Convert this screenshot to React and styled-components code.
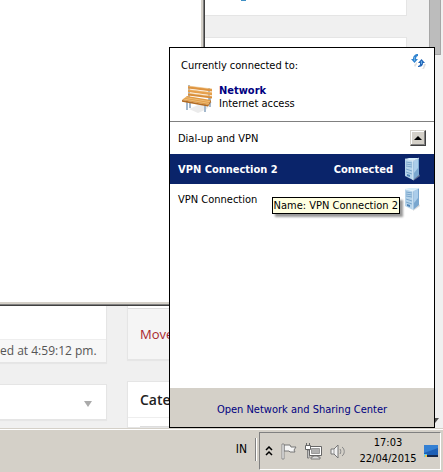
import React from "react"
import styled, { createGlobalStyle, css } from "styled-components"

const GlobalStyle = createGlobalStyle`
  * {
    box-sizing: border-box;
  }

  body {
    margin: 0;
    font-family: "DejaVu Sans Condensed", "DejaVu Sans", sans-serif;
    font-size: 11px;
    line-height: 13px;
    color: #000;
  }

  button {
    font: inherit;
    color: inherit;
    margin: 0;
    padding: 0;
    border: 0;
    background: none;
    text-align: left;
  }

  svg {
    display: block;
    flex: none;
  }
`

const Desktop = styled.div`
  display: flex;
  flex-direction: column;
  height: 100vh;
  overflow: hidden;
`

const WorkArea = styled.main`
  position: relative;
  flex: 1;
  min-height: 0;
  display: flex;
  overflow: hidden;
  background: #f0f0f0;
  font-family: "Open Sans", sans-serif;
`

const Column = styled.div`
  display: flex;
  flex-direction: column;
  gap: 21px;
  min-width: 0;
  flex: ${({ $grow }) => ($grow ? "1" : "0 0 107px")};
  padding-bottom: ${({ $grow }) => ($grow ? "0" : "8px")};
`

const Card = styled.section`
  display: flex;
  flex-direction: column;
  justify-content: ${({ $fill }) => ($fill ? "flex-end" : "flex-start")};
  flex: ${({ $fill }) => ($fill ? "1" : "none")};
  background: #fff;
  border: 1px solid #e5e5e5;
  border-left-width: ${({ $cut }) => ($cut ? "0" : "1px")};
  box-shadow: 0 1px 1px rgba(0, 0, 0, 0.04);
`

const CardEnd = styled.div`
  height: 16px;
  padding-left: 113px;
  border: 1px solid #e5e5e5;
  border-top: 0;
  background: #fff;
`

const LinkTail = styled.span`
  display: block;
  width: 5px;
  height: 1px;
  background: #3f8fc4;
`

const SavedBar = styled.footer`
  padding: 2px 10px 2px 0;
  border-top: 1px solid #eee;
  background: #f7f7f7;
  color: #555;
  font-size: 12px;
  line-height: 18px;
  text-align: right;
  white-space: nowrap;
`

const TrashBar = styled.footer`
  padding: 15px 12px;
  border-top: 1px solid #ddd;
  background: #f5f5f5;
  color: #a8272d;
  font-size: 13px;
  line-height: 20px;
`

const CardTitle = styled.h2`
  margin: 0;
  padding: 9px 12px 8px;
  border-bottom: 1px solid #eee;
  color: #222;
  font-size: 14px;
  font-weight: 600;
  line-height: 18px;
`

const CategoryBox = styled.div`
  height: 9px;
  margin: 0 12px;
  border-bottom: 1px solid #ddd;
`

const CardToggle = styled.button`
  display: flex;
  justify-content: flex-end;
  align-items: center;
  height: 34px;
  padding: 4px 14px 0;
`

const Gutter = styled.div`
  flex: 0 0 20px;
`

const ScrollTrack = styled.div`
  flex: 0 0 14px;
  display: flex;
  flex-direction: column;
  justify-content: space-between;
  margin-left: 22px;
  padding-bottom: 4px;
`

const ScrollThumb = styled.div`
  width: 12px;
  height: 55px;
  border: 1px solid #a6a6a6;
  border-top: 0;
  background: #bcbcbc;
`

const BlankWindow = styled.div`
  position: absolute;
  top: 0;
  left: 0;
  width: 205px;
  height: 306px;
  background: #fff;
  border: solid #404040;
  border-width: 0 1px 1px 0;
  box-shadow: inset -1px -1px #808080, inset -3px -3px #d4d0c8;
`

const Flyout = styled.section`
  position: absolute;
  top: 47px;
  right: 8px;
  bottom: 0;
  width: 266px;
  display: flex;
  flex-direction: column;
  background: #fff;
  border: 1px solid #000;
  font-family: "DejaVu Sans Condensed", "DejaVu Sans", sans-serif;
`

const Summary = styled.header`
  display: flex;
  justify-content: space-between;
  align-items: flex-start;
  height: 74px;
  padding: 6px 7px 0 11px;
  border-bottom: 1px solid #808080;
`

const SummaryText = styled.div`
  padding-top: 5px;
`

const CurrentNetwork = styled.div`
  display: flex;
  gap: 6px;
  margin-top: 12px;
`

const NetworkName = styled.strong`
  display: block;
  color: #000080;
`

const GroupHeader = styled.div`
  display: flex;
  justify-content: space-between;
  align-items: center;
  height: 32px;
  padding: 0 8px;
`

const CollapseButton = styled.button`
  display: flex;
  align-items: center;
  justify-content: center;
  width: 16px;
  height: 16px;
  background: #d4d0c8;
  border: 1px solid;
  border-color: #d4d0c8 #404040 #404040 #d4d0c8;
  box-shadow: inset -1px -1px #808080, inset 1px 1px #fff;
`

const ConnectionList = styled.div`
  position: relative;
  flex: 1;
`

const Connection = styled.button`
  display: flex;
  align-items: center;
  width: 100%;
  height: 30px;
  padding: 0 14px 0 8px;

  ${({ $selected }) =>
    $selected &&
    css`
      background: #0a246a;
      color: #fff;
      font-weight: bold;
    `}
`

const ConnectionName = styled.span`
  flex: 1;
`

const ConnectionState = styled.span`
  margin-right: 11px;
`

const Tooltip = styled.div`
  position: absolute;
  top: 43px;
  right: 34px;
  padding: 1px;
  border: 1px solid #000;
  background: #ffffe1;
  box-shadow: 3px 3px 2px rgba(0, 0, 0, 0.4);
  line-height: 13px;
  white-space: nowrap;
`

const FlyoutFooter = styled.footer`
  display: flex;
  align-items: center;
  justify-content: center;
  height: 39px;
  padding-top: 3px;
  background: #d4d0c8;
`

const CenterLink = styled.a`
  color: #000080;
  text-decoration: none;
`

const Taskbar = styled.footer`
  display: flex;
  justify-content: flex-end;
  height: 44px;
  padding: 2px 2px 2px 0;
  border-top: 1px solid #d4d0c8;
  background: #d4d0c8;
  box-shadow: inset 0 1px #fff;
`

const LanguageButton = styled.button`
  padding: 0 8px 2px;
  font-size: 12px;
`

const Divider = styled.div`
  width: 2px;
  height: 23px;
  margin: 7px 2px 0 0;
  border-left: 1px solid #808080;
  border-right: 1px solid #fff;
`

const Tray = styled.div`
  display: flex;
  align-items: center;
  width: 182px;
  margin-top: 1px;
  padding: 0 1px 0 5px;
  border: 1px solid;
  border-color: #808080 #fff #fff #808080;
`

const TrayButton = styled.button`
  display: flex;
  margin-right: 8px;
`

const Clock = styled.time`
  flex: 1;
  line-height: 16px;
  text-align: center;
`

const BenchIcon = () => (
  <svg width="32" height="32" viewBox="0 0 32 32" fill="none">
    <path d="m8 25 16-7h7l-5 7-9 4z" fill="#ddd" opacity=".6" />
    <path d="M8 1v13M28 4v12M9 18v6M29 14v9" stroke="#93a8bf" strokeWidth="1.6" />
    <path d="M6 18v8M24 20v8" stroke="#a3b8cd" strokeWidth="2" />
    <path d="m7 2 24 3v2.6L7 4.4z" fill="#de9440" />
    <path d="m7 5.6 24 3v2.6L7 8z" fill="#e6a04c" />
    <path d="m7 9.2 24 3v2.4L7 11.6z" fill="#d88d39" />
    <path d="m7 2 24 3M7 5.6l24 3M7 9.2l24 3" stroke="#efbd7a" strokeWidth=".6" />
    <path d="m6 12 24 4-3 5-26-5z" fill="#e09b45" />
    <path d="m4 13.5 25 4.2M2.5 15l25.5 4.4" stroke="#f5ca8b" strokeWidth=".7" />
    <path d="m1 16 26 5 3-5v2l-3 4.6L1 17.8z" fill="#b26b22" />
  </svg>
)

const RefreshIcon = () => (
  <svg width="16" height="16" viewBox="0 0 16 16">
    <path d="m3 11 3-3v2l-2 3zM10 14h2l1-4h2l-2 5z" fill="#bbb" opacity=".5" />
    <path d="M7 0C4 0 2 2 2 5H0l3.500 4L7 5H5c0-2 1-3 2-3z" fill="#3184d0" />
    <path d="M7 13c3 0 5-1 5-4h2l-3.500-4L7 9h2c0 2 0 2-2 3z" fill="#2467b8" />
    <path d="M3.500 3v4M10.500 7v3" stroke="#69aee6" />
  </svg>
)

const ServerIcon = () => (
  <svg width="16" height="24" viewBox="0 0 16 24">
    <path d="m9 24 7-5-1-2-6 4z" fill="#bbb" opacity=".5" />
    <path d="m1 2 4-1h10l-6 3z" fill="#d7eefb" />
    <path d="m1 2 8 2v19l-8-4z" fill="#b5d3ea" />
    <path d="m9 4 6-3v17l-6 5z" fill="#7aa7cf" />
    <path d="m10 4 4-2v9l-4 5z" fill="#abcdea" />
    <path
      d="m2 5 6 1M2 7l6 1M2 9l6 1M2 12l6 2M2 15l6 2"
      stroke="#6b9ac4"
      strokeWidth=".8"
    />
    <path d="m1 2 8 2v19M9 4l6-3" fill="none" stroke="#eef9ff" strokeWidth=".7" />
    <path d="m3 17 3 1v2l-3-1z" fill="#4f83b5" />
  </svg>
)

const FlagIcon = () => (
  <svg width="16" height="17" viewBox="0 0 16 17">
    <path
      d="M3 2h6l1 2h5l-2 3 1 2H9L8 8H3z"
      fill="#f5f5f5"
      stroke="#777"
    />
    <path d="M1 1h2v15H1z" fill="#fff" stroke="#777" strokeWidth=".8" />
  </svg>
)

const NetworkIcon = () => (
  <svg width="17" height="17" viewBox="0 0 17 17">
    <path d="M4.500 3.500h12v9h-12z" fill="#fff" stroke="#666" />
    <path d="M6.500 5.500h8v5h-8z" fill="#b0b0b0" stroke="#999" />
    <path d="M8 13h5v1h2v2H6v-2h2z" fill="#ddd" stroke="#666" strokeWidth=".8" />
    <path d="M1.500 0v3M4.500 0v3" stroke="#666" />
    <path d="M.500 2.500h5v4h-5z" fill="#fff" stroke="#666" />
    <path d="M2.500 7h1.500v8H2.500z" fill="#fff" stroke="#666" strokeWidth=".8" />
  </svg>
)

const SpeakerIcon = () => (
  <svg width="15" height="17" viewBox="0 0 15 17" fill="none">
    <path d="M1 6h3l4-4v13l-4-4H1z" fill="#f2f2f2" stroke="#777" />
    <path d="M4 6v5" stroke="#999" />
    <path d="M10 6c1 1 1 4 0 5M12 4c3 2 3 7 0 9" stroke="#888" />
  </svg>
)

const ScreenIcon = () => (
  <svg width="16" height="13" viewBox="0 0 16 13">
    <path d="M1 0h14v10H1z" fill="#1d5fb6" />
    <path d="M1 0h14v3L1 8z" fill="#3480d3" />
    <path d="M1 10h14v2H1z" fill="#17294d" />
    <path d="M1 9h3v3H1z" fill="#65cde8" />
    <path d="M2 10h2v2H2z" fill="#f0c24b" />
  </svg>
)

const App = () => (
  <Desktop>
    <GlobalStyle />
    <WorkArea>
      <Column>
        <Card $fill $cut>
          <SavedBar>ed at 4:59:12 pm.</SavedBar>
        </Card>
        <Card $cut>
          <CardToggle aria-label="Toggle panel">
            <svg width="8" height="6" viewBox="0 0 8 6">
              <path d="M0 0h8L4 6z" fill="#aaa" />
            </svg>
          </CardToggle>
        </Card>
      </Column>
      <Gutter />
      <Column $grow>
        <CardEnd>
          <LinkTail />
        </CardEnd>
        <Card $fill>
          <TrashBar>Move</TrashBar>
        </Card>
        <Card>
          <CardTitle>Cate</CardTitle>
          <CategoryBox />
        </Card>
      </Column>
      <ScrollTrack>
        <ScrollThumb />
        <svg width="12" height="6" viewBox="0 0 12 6">
          <path d="M1 0h9L6 5z" fill="#505050" />
        </svg>
      </ScrollTrack>

      <BlankWindow />

      <Flyout>
        <Summary>
          <SummaryText>
            Currently connected to:
            <CurrentNetwork>
              <BenchIcon />
              <div>
                <NetworkName>Network</NetworkName>
                Internet access
              </div>
            </CurrentNetwork>
          </SummaryText>
          <button aria-label="Refresh">
            <RefreshIcon />
          </button>
        </Summary>
        <GroupHeader>
          Dial-up and VPN
          <CollapseButton aria-label="Collapse">
            <svg width="8" height="4" viewBox="0 0 8 4">
              <path d="M4 0 8 4H0z" fill="#000" />
            </svg>
          </CollapseButton>
        </GroupHeader>
        <ConnectionList>
          <Connection $selected>
            <ConnectionName>VPN Connection 2</ConnectionName>
            <ConnectionState>Connected</ConnectionState>
            <ServerIcon />
          </Connection>
          <Connection>
            <ConnectionName>VPN Connection</ConnectionName>
            <ServerIcon />
          </Connection>
          <Tooltip role="tooltip">Name: VPN Connection 2</Tooltip>
        </ConnectionList>
        <FlyoutFooter>
          <CenterLink href="#sharing-center">
            Open Network and Sharing Center
          </CenterLink>
        </FlyoutFooter>
      </Flyout>
    </WorkArea>

    <Taskbar>
      <LanguageButton>IN</LanguageButton>
      <Divider />
      <Tray>
        <TrayButton aria-label="Show hidden icons">
          <svg width="8" height="10" viewBox="0 0 8 10" fill="none">
            <path d="m1 4 3-3 3 3M1 9l3-3 3 3" stroke="#000" strokeWidth="1.5" />
          </svg>
        </TrayButton>
        <TrayButton aria-label="Action center">
          <FlagIcon />
        </TrayButton>
        <TrayButton aria-label="Network">
          <NetworkIcon />
        </TrayButton>
        <TrayButton aria-label="Volume">
          <SpeakerIcon />
        </TrayButton>
        <Clock>
          17:03
          <br />
          22/04/2015
        </Clock>
        <ScreenIcon />
      </Tray>
    </Taskbar>
  </Desktop>
)

export default App
